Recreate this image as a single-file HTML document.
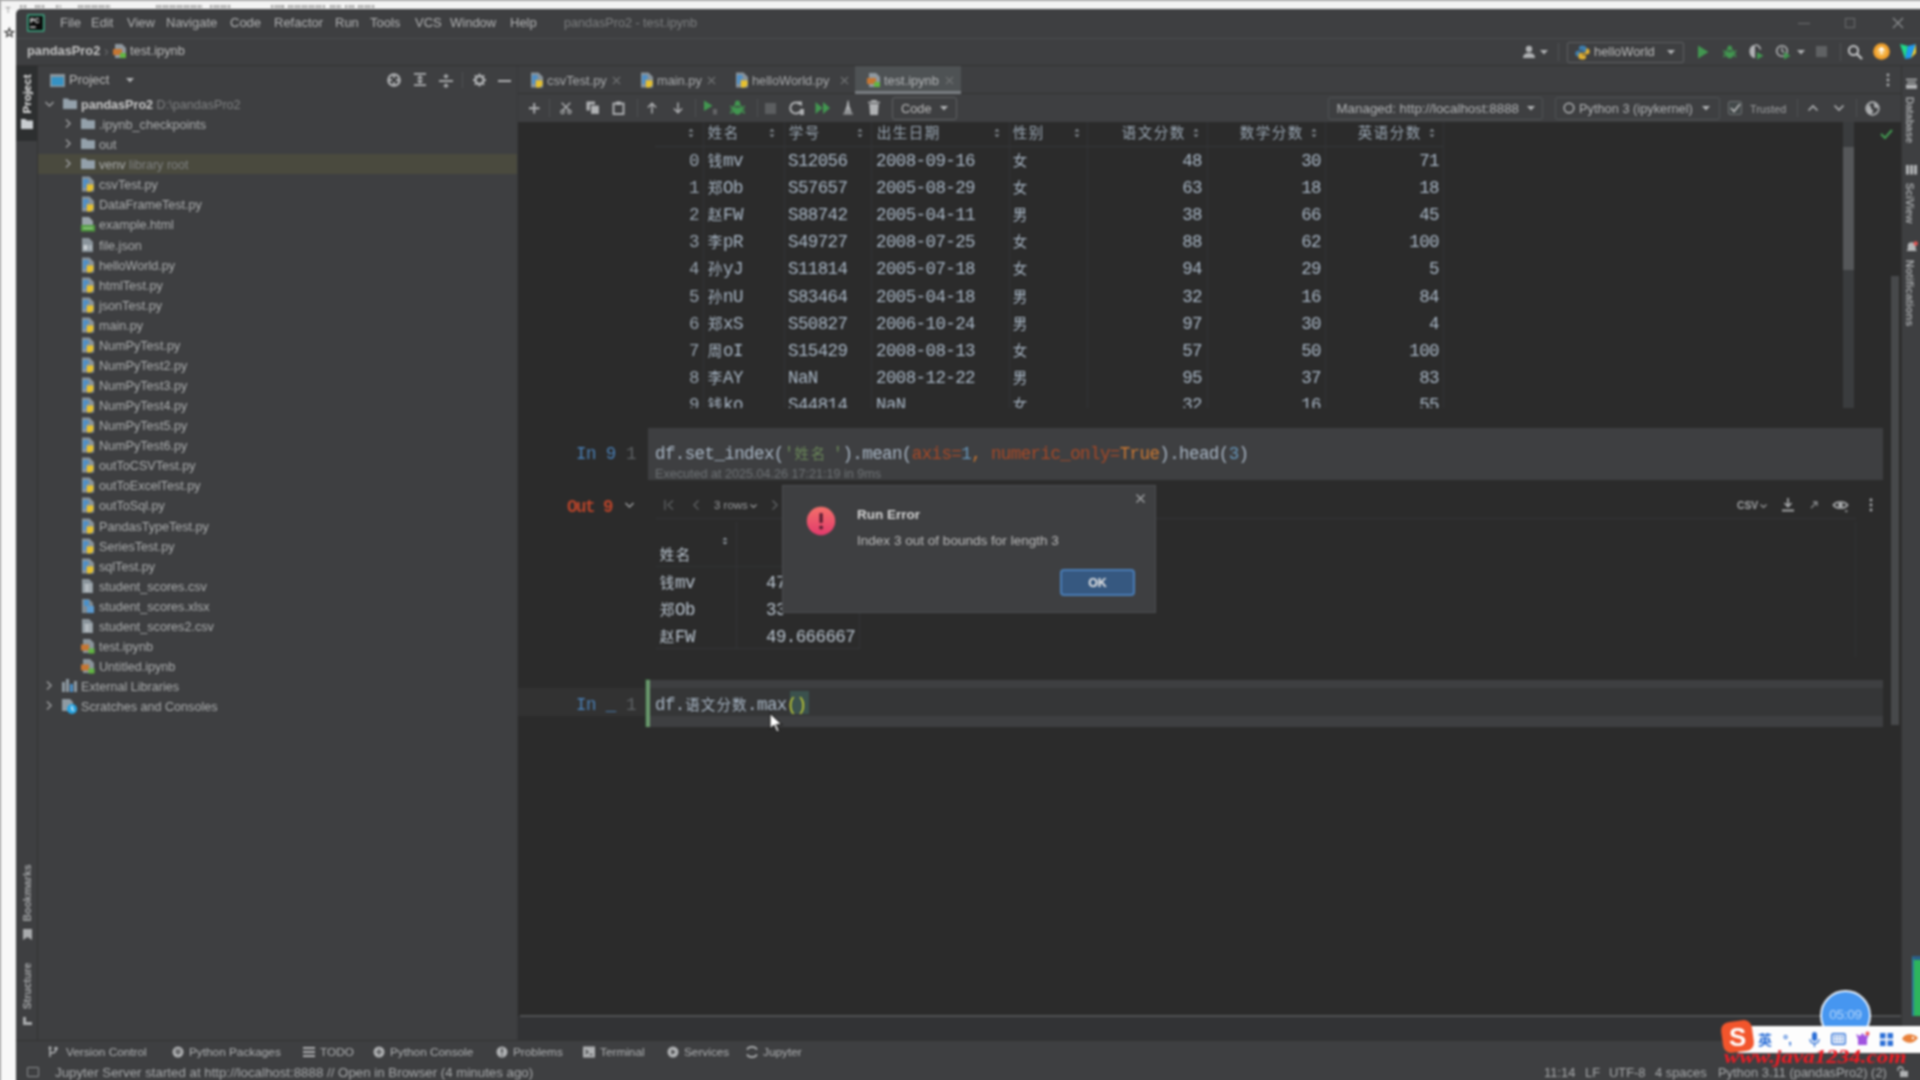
<!DOCTYPE html><html lang="zh"><head><meta charset="utf-8"><title>pandasPro2 - test.ipynb</title><style>
*{box-sizing:border-box;margin:0;padding:0}
html,body{width:1920px;height:1080px;overflow:hidden;background:#f8f8f8}
body{position:relative;font-family:"Liberation Sans","Noto Sans CJK SC",sans-serif;font-size:12.6px;color:#bbbbbb;line-height:1}
.a{position:absolute}
.t{position:absolute;white-space:nowrap;line-height:20px;height:20px}
.mono{font-family:"Liberation Mono","Noto Sans CJK SC",monospace;letter-spacing:-0.600px}
.cj{letter-spacing:0}
#win{left:16px;top:9px;width:1934px;height:1101px;background:#3e3f41;border-top-left-radius:5px;overflow:hidden}
#blurwrap{position:absolute;left:-30px;top:-30px;width:1980px;height:1140px;filter:blur(0.95px);background:#f8f8f8}
#inner{position:absolute;left:30px;top:30px;width:1920px;height:1080px}
.cj{display:inline-block;text-align:center;line-height:1;font-family:"Liberation Mono","Noto Sans CJK SC",monospace}
svg{position:absolute;overflow:visible}
</style></head><body><div id="blurwrap"><div id="inner">
<div class="a" style="left:-30px;top:-30px;width:1980px;height:31px;background:#a8a8a8"></div>
<div class="a" style="left:-30px;top:1px;width:1980px;height:8.500px;background:#f3f3f3"></div>
<div class="a" style="left:-30px;top:-30px;width:31.200px;height:1140px;background:#a8a8a8"></div>
<div class="a" style="left:20px;top:4.500px;width:7px;height:3px;background:repeating-linear-gradient(90deg,#a2a2a2 0 2px,#e2e2e2 2px 3.500px)"></div>
<div class="a" style="left:35px;top:4.500px;width:10px;height:3px;background:repeating-linear-gradient(90deg,#a2a2a2 0 2px,#e2e2e2 2px 3.500px)"></div>
<div class="a" style="left:56px;top:4.500px;width:5px;height:3px;background:repeating-linear-gradient(90deg,#a2a2a2 0 2px,#e2e2e2 2px 3.500px)"></div>
<div class="a" style="left:78px;top:4.500px;width:32px;height:3px;background:repeating-linear-gradient(90deg,#a2a2a2 0 2px,#e2e2e2 2px 3.500px)"></div>
<div class="a" style="left:156px;top:4.500px;width:46px;height:3px;background:repeating-linear-gradient(90deg,#a2a2a2 0 2px,#e2e2e2 2px 3.500px)"></div>
<div class="a" style="left:210px;top:4.500px;width:21px;height:3px;background:repeating-linear-gradient(90deg,#a2a2a2 0 2px,#e2e2e2 2px 3.500px)"></div>
<div class="a" style="left:271px;top:4.500px;width:14px;height:3px;background:repeating-linear-gradient(90deg,#a2a2a2 0 2px,#e2e2e2 2px 3.500px)"></div>
<div class="a" style="left:288px;top:4.500px;width:37px;height:3px;background:repeating-linear-gradient(90deg,#a2a2a2 0 2px,#e2e2e2 2px 3.500px)"></div>
<div class="a" style="left:330px;top:4.500px;width:11px;height:3px;background:repeating-linear-gradient(90deg,#a2a2a2 0 2px,#e2e2e2 2px 3.500px)"></div>
<div class="a" style="left:345px;top:4.500px;width:10px;height:3px;background:repeating-linear-gradient(90deg,#a2a2a2 0 2px,#e2e2e2 2px 3.500px)"></div>
<div class="a" style="left:358px;top:4.500px;width:17px;height:3px;background:repeating-linear-gradient(90deg,#a2a2a2 0 2px,#e2e2e2 2px 3.500px)"></div>
<div class="t" style="left:5.500px;top:0px;font-size:8.500px;color:#8a8a8a">T</div>
<div class="t" style="left:3.500px;top:23px;font-size:13px;color:#1d1d1d;font-weight:bold;-webkit-text-stroke:0.600px #1d1d1d;font-family:'Liberation Sans','DejaVu Sans',sans-serif">☆</div>
<div id="win" class="a"></div>
<div class="a" style="left:16px;top:38px;width:1934px;height:1px;background:#4a4d4f;"></div>
<div class="t" style="left:60px;top:13px;color:#b2b3b4;font-size:13px;">File</div>
<div class="t" style="left:91px;top:13px;color:#b2b3b4;font-size:13px;">Edit</div>
<div class="t" style="left:127px;top:13px;color:#b2b3b4;font-size:13px;">View</div>
<div class="t" style="left:166px;top:13px;color:#b2b3b4;font-size:13px;">Navigate</div>
<div class="t" style="left:230px;top:13px;color:#b2b3b4;font-size:13px;">Code</div>
<div class="t" style="left:274px;top:13px;color:#b2b3b4;font-size:13px;">Refactor</div>
<div class="t" style="left:335px;top:13px;color:#b2b3b4;font-size:13px;">Run</div>
<div class="t" style="left:370px;top:13px;color:#b2b3b4;font-size:13px;">Tools</div>
<div class="t" style="left:415px;top:13px;color:#b2b3b4;font-size:13px;">VCS</div>
<div class="t" style="left:450px;top:13px;color:#b2b3b4;font-size:13px;">Window</div>
<div class="t" style="left:510px;top:13px;color:#b2b3b4;font-size:13px;">Help</div>
<div class="t" style="left:564px;top:13px;color:#7d7f80;font-size:12.6px;">pandasPro2 - test.ipynb</div>
<div class="t" style="left:27px;top:41px;color:#c4c4c4;font-size:12.8px;font-weight:bold;">pandasPro2</div>
<div class="t" style="left:130px;top:41px;color:#bbbbbb;font-size:12.8px;">test.ipynb</div>
<div class="a" style="left:16px;top:65px;width:1934px;height:1px;background:#323232;"></div>
<div class="a" style="left:16px;top:66px;width:21px;height:974px;background:#3e3f41;"></div>
<div class="a" style="left:16px;top:66px;width:21px;height:75px;background:#2d2f30;"></div>
<div class="a" style="left:37px;top:66px;width:1px;height:974px;background:#323232;"></div>
<div class="t" style="left:69px;top:70px;color:#bbbbbb;font-size:13px;">Project</div>
<div class="a" style="left:38px;top:154px;width:480px;height:20px;background:#4a4a3e;"></div>
<div class="t" style="left:81px;top:95.0px;color:#abadae;font-size:12.6px;"><b style="color:#c8c8c8">pandasPro2</b> <span style="color:#7f8182">D:\pandasPro2</span></div>
<div class="t" style="left:99px;top:115.1px;color:#abadae;font-size:12.6px;">.ipynb_checkpoints</div>
<div class="t" style="left:99px;top:135.1px;color:#abadae;font-size:12.6px;">out</div>
<div class="t" style="left:99px;top:155.2px;color:#abadae;font-size:12.6px;">venv <span style="color:#7f8182">library root</span></div>
<div class="t" style="left:99px;top:175.3px;color:#abadae;font-size:12.6px;">csvTest.py</div>
<div class="t" style="left:99px;top:195.3px;color:#abadae;font-size:12.6px;">DataFrameTest.py</div>
<div class="t" style="left:99px;top:215.4px;color:#abadae;font-size:12.6px;">example.html</div>
<div class="t" style="left:99px;top:235.5px;color:#abadae;font-size:12.6px;">file.json</div>
<div class="t" style="left:99px;top:255.60000000000002px;color:#abadae;font-size:12.6px;">helloWorld.py</div>
<div class="t" style="left:99px;top:275.6px;color:#abadae;font-size:12.6px;">htmlTest.py</div>
<div class="t" style="left:99px;top:295.7px;color:#abadae;font-size:12.6px;">jsonTest.py</div>
<div class="t" style="left:99px;top:315.8px;color:#abadae;font-size:12.6px;">main.py</div>
<div class="t" style="left:99px;top:335.8px;color:#abadae;font-size:12.6px;">NumPyTest.py</div>
<div class="t" style="left:99px;top:355.9px;color:#abadae;font-size:12.6px;">NumPyTest2.py</div>
<div class="t" style="left:99px;top:376.0px;color:#abadae;font-size:12.6px;">NumPyTest3.py</div>
<div class="t" style="left:99px;top:396.1px;color:#abadae;font-size:12.6px;">NumPyTest4.py</div>
<div class="t" style="left:99px;top:416.1px;color:#abadae;font-size:12.6px;">NumPyTest5.py</div>
<div class="t" style="left:99px;top:436.2px;color:#abadae;font-size:12.6px;">NumPyTest6.py</div>
<div class="t" style="left:99px;top:456.3px;color:#abadae;font-size:12.6px;">outToCSVTest.py</div>
<div class="t" style="left:99px;top:476.3px;color:#abadae;font-size:12.6px;">outToExcelTest.py</div>
<div class="t" style="left:99px;top:496.4px;color:#abadae;font-size:12.6px;">outToSql.py</div>
<div class="t" style="left:99px;top:516.5px;color:#abadae;font-size:12.6px;">PandasTypeTest.py</div>
<div class="t" style="left:99px;top:536.5px;color:#abadae;font-size:12.6px;">SeriesTest.py</div>
<div class="t" style="left:99px;top:556.6px;color:#abadae;font-size:12.6px;">sqlTest.py</div>
<div class="t" style="left:99px;top:576.7px;color:#abadae;font-size:12.6px;">student_scores.csv</div>
<div class="t" style="left:99px;top:596.8px;color:#abadae;font-size:12.6px;">student_scores.xlsx</div>
<div class="t" style="left:99px;top:616.8px;color:#abadae;font-size:12.6px;">student_scores2.csv</div>
<div class="t" style="left:99px;top:636.9px;color:#abadae;font-size:12.6px;">test.ipynb</div>
<div class="t" style="left:99px;top:657.0px;color:#abadae;font-size:12.6px;">Untitled.ipynb</div>
<div class="t" style="left:81px;top:677.0px;color:#abadae;font-size:12.6px;">External Libraries</div>
<div class="t" style="left:81px;top:697.1px;color:#abadae;font-size:12.6px;">Scratches and Consoles</div>
<div class="a" style="left:518px;top:66px;width:1383px;height:28px;background:#3e3f41;"></div>
<div class="a" style="left:518px;top:93px;width:1383px;height:1px;background:#323232;"></div>
<div class="a" style="left:518px;top:94px;width:1383px;height:28px;background:#3e3f41;"></div>
<div class="a" style="left:518px;top:122px;width:1383px;height:918px;background:#2b2b2b;"></div>
<div class="a" style="left:517px;top:66px;width:1px;height:974px;background:#37383a;"></div>
<div class="a" style="left:1901px;top:66px;width:49px;height:974px;background:#3e3f41;"></div>
<div class="a" style="left:1901px;top:66px;width:1px;height:974px;background:#323232;"></div>
<div class="a" style="left:16px;top:1040px;width:1934px;height:1px;background:#323232;"></div>
<div class="a" style="left:16px;top:1041px;width:1934px;height:22px;background:#3e3f41;"></div>
<div class="a" style="left:16px;top:1063px;width:1934px;height:47px;background:#3e3f41;"></div>
<svg style="left:27px;top:13.5px" width="17.5" height="18" viewBox="0 0 18 18"><rect x="0" y="0" width="18" height="18" rx="1" fill="#3fa884"/><rect x="1.6" y="1.6" width="14.8" height="14.8" fill="#0b0b0b"/><text x="3" y="9" font-family="Liberation Sans,sans-serif" font-size="7" font-weight="bold" fill="#fff">PC</text><rect x="3" y="12.6" width="6" height="1.3" fill="#fff"/></svg>
<div class="a" style="left:1798px;top:23px;width:12px;height:1px;background:#6e7072;"></div>
<svg style="left:1845px;top:18px" width="10" height="10" viewBox="0 0 10 10"><rect x="0.5" y="0.5" width="9" height="9" fill="none" stroke="#6a6c6e" stroke-width="1"/></svg>
<svg style="left:1893px;top:18px" width="10" height="10" viewBox="0 0 10 10"><path d="M0 0L10 10M10 0L0 10" stroke="#8a8c8e" stroke-width="1.3"/></svg>
<div class="t" style="left:104px;top:41px;color:#6d6f70;font-size:14px;">›</div>
<svg style="left:113px;top:43px" width="14" height="16" viewBox="0 0 14 16"><path d="M2 1h7l4 4v10H2z" fill="#8f989f"/><rect x="0" y="6" width="9" height="6" fill="#c57633"/><rect x="7" y="10" width="6" height="5" fill="#62b543"/></svg>
<svg style="left:1522px;top:45px" width="16" height="14" viewBox="0 0 16 14"><circle cx="7" cy="4" r="3.2" fill="#afb1b3"/><path d="M1 13c0-4 3-5 6-5s6 1 6 5z" fill="#afb1b3"/></svg>
<svg style="left:1540px;top:50px" width="8" height="5" viewBox="0 0 8 5"><path d="M0 0h8L4 4.5z" fill="#afb1b3"/></svg>
<div class="a" style="left:1558px;top:43px;width:1px;height:18px;background:#515355;"></div>
<div class="a" style="left:1567px;top:42px;width:117px;height:21px;border:1px solid #5e6163;border-radius:2px"></div>
<svg style="left:1575px;top:45px" width="15" height="15" viewBox="0 0 14 14"><path d="M7 0.5c-3 0-3.2 1.2-3.2 2.3V4.5H7.2v.8H2.2C1 5.3.3 6.4.3 8s.8 2.7 2 2.7h1.3V8.8c0-1.2 1-2.2 2.2-2.2h3.2c1 0 1.8-.8 1.8-1.8V2.8C10.800 1.500 9.700.5 7 .5z" fill="#3d7dae"/><path d="M7 13.500c3 0 3.200-1.200 3.200-2.300V9.500H6.800v-.8h5c1.200 0 1.900-1.100 1.900-2.700s-.8-2.700-2-2.700h-1.300v1.900c0 1.200-1 2.200-2.200 2.200H5c-1 0-1.800.8-1.800 1.800v2c0 1.300 1.100 2.300 3.800 2.300z" fill="#e0b032"/></svg>
<div class="t" style="left:1594px;top:42px;color:#bbbbbb;font-size:12.9px;">helloWorld</div>
<svg style="left:1667px;top:50px" width="8" height="5" viewBox="0 0 8 5"><path d="M0 0h8L4 4.5z" fill="#afb1b3"/></svg>
<svg style="left:1697px;top:45px" width="12" height="14" viewBox="0 0 12 14"><path d="M1 0.500L11.500 7 1 13.500z" fill="#429650"/></svg>
<svg style="left:1723px;top:45px" width="13.5" height="14.5" viewBox="0 0 15 16"><ellipse cx="7.500" cy="9" rx="4.800" ry="5.800" fill="#429650"/><circle cx="7.500" cy="3.200" r="2.600" fill="#429650"/><path d="M0 6l3 2M15 6l-3 2M0 13l3-1.500M15 13l-3-1.500M0.500 9.500h14" stroke="#429650" stroke-width="1.400"/><rect x="4.500" y="6" width="6" height="1.400" fill="#3e3f41"/></svg>
<svg style="left:1748px;top:44px" width="16" height="16" viewBox="0 0 16 16"><path d="M7 1C3.500 1 1.500 3.500 1.500 7.500S4 14 7 14V1z" fill="#afb1b3"/><path d="M7 1c3 0 5 2 5.500 4.500" stroke="#afb1b3" stroke-width="1.600" fill="none"/><path d="M9 8l6.500 3.700L9 15.500z" fill="#429650"/></svg>
<svg style="left:1775px;top:44px" width="16" height="16" viewBox="0 0 16 16"><circle cx="7" cy="7" r="5.300" fill="none" stroke="#afb1b3" stroke-width="1.600"/><path d="M7 3.500V7l2.200 1.300" stroke="#afb1b3" stroke-width="1.400" fill="none"/><path d="M9 8l6.500 3.700L9 15.500z" fill="#429650"/></svg>
<svg style="left:1797px;top:50px" width="8" height="5" viewBox="0 0 8 5"><path d="M0 0h8L4 4.500z" fill="#afb1b3"/></svg>
<div class="a" style="left:1816px;top:46px;width:11px;height:11px;background:#5f6163;"></div>
<div class="a" style="left:1840px;top:43px;width:1px;height:18px;background:#515355;"></div>
<svg style="left:1847px;top:44px" width="16" height="16" viewBox="0 0 16 16"><circle cx="6.500" cy="6.500" r="4.600" fill="none" stroke="#c0c2c4" stroke-width="2"/><path d="M10 10l5 5" stroke="#c0c2c4" stroke-width="2.400"/></svg>
<svg style="left:1873px;top:43px" width="17" height="17" viewBox="0 0 17 17"><circle cx="8.500" cy="8.500" r="8.300" fill="#f0a02c"/><circle cx="8.500" cy="8.500" r="5" fill="#f6bb55"/><path d="M8.500 5v6M6 7.500l2.500-2.500 2.500 2.500" stroke="#fff" stroke-width="1.600" fill="none"/></svg>
<svg style="left:1899px;top:43px" width="18" height="17" viewBox="0 0 18 17"><path d="M1 1l8 2-3 13z" fill="#21d789"/><path d="M9 3l8-2-5 14-6 1z" fill="#1e9af0"/><path d="M12 15l5-14v9z" fill="#f3d232"/></svg>
<div class="t" style="left:17px;top:84px;width:20px;transform:rotate(-90deg);transform-origin:10px 10px;font-size:11.500px;font-weight:bold;color:#e8e8e8;text-align:center;overflow:visible"><span style="position:absolute;left:-13px;top:0;width:46px;text-align:center">Project</span></div>
<svg style="left:21px;top:118px" width="12" height="11" viewBox="0 0 12 11"><path d="M0 1h4.500l1.200 1.600H12V11H0z" fill="#c9cdd0"/></svg>
<div class="t" style="left:17px;top:883px;width:20px;transform:rotate(-90deg);transform-origin:10px 10px;font-size:10.500px;font-weight:bold;color:#a3a5a7"><span style="position:absolute;left:-22px;top:0;width:64px;text-align:center">Bookmarks</span></div>
<svg style="left:23px;top:929px" width="9" height="11" viewBox="0 0 9 11"><path d="M0 0h9v11L4.500 8 0 11z" fill="#a9abad"/></svg>
<div class="t" style="left:17px;top:976px;width:20px;transform:rotate(-90deg);transform-origin:10px 10px;font-size:10.500px;font-weight:bold;color:#a3a5a7"><span style="position:absolute;left:-20px;top:0;width:60px;text-align:center">Structure</span></div>
<svg style="left:23px;top:1017px" width="9" height="8" viewBox="0 0 9 8"><path d="M0 0h3v8H0zM3 5h6v3H3z" fill="#a9abad"/></svg>
<svg style="left:50px;top:74px" width="15" height="13" viewBox="0 0 15 13"><rect x="0" y="0" width="15" height="13" fill="#8b959c"/><rect x="1.500" y="3" width="12" height="8.500" fill="#3592c4"/></svg>
<svg style="left:126px;top:78px" width="8" height="5" viewBox="0 0 8 5"><path d="M0 0h8L4 4.500z" fill="#afb1b3"/></svg>
<svg style="left:386.5px;top:73px" width="14" height="14" viewBox="0 0 14 14"><circle cx="7" cy="7" r="5.700" fill="none" stroke="#afb1b3" stroke-width="2.200"/><path d="M7 1v4M7 9v4M1 7h4M9 7h4" stroke="#afb1b3" stroke-width="1.800"/></svg>
<svg style="left:413.5px;top:73px" width="12" height="13" viewBox="0 0 12 13"><path d="M0 0.900h12M0 12.100h12" stroke="#afb1b3" stroke-width="1.800"/><path d="M6 3.500v6M3.500 5.500L6 3.200 8.500 5.500M3.500 7.500L6 9.800 8.500 7.500" stroke="#afb1b3" stroke-width="1.400" fill="none"/></svg>
<svg style="left:438.5px;top:73.5px" width="14" height="14" viewBox="0 0 14 14"><path d="M0 7h14" stroke="#afb1b3" stroke-width="1.800"/><path d="M4.800 1.500L7 3.800l2.200-2.300M7 0v3.500M4.800 12.500L7 10.200l2.200 2.300M7 14v-3.500" stroke="#afb1b3" stroke-width="1.400" fill="none"/></svg>
<div class="a" style="left:462px;top:72px;width:1px;height:16px;background:#4d5052;"></div>
<svg style="left:472.5px;top:73px" width="13" height="14" viewBox="0 0 14 14"><circle cx="7" cy="7" r="4.300" fill="none" stroke="#afb1b3" stroke-width="2.600"/><path d="M7 0v14M0 7h14M2 2l10 10M12 2L2 12" stroke="#afb1b3" stroke-width="2" stroke-dasharray="2.200 9.800"/><circle cx="7" cy="7" r="1.800" fill="#3e3f41"/></svg>
<div class="a" style="left:497.5px;top:79.5px;width:13.5px;height:2px;background:#afb1b3;"></div>
<svg style="left:45px;top:101.0px" width="9" height="6" viewBox="0 0 9 6"><path d="M0.500 1l4 4 4-4" stroke="#9a9c9e" stroke-width="1.500" fill="none"/></svg>
<svg style="left:63px;top:98.0px" width="14" height="11" viewBox="0 0 14 11"><path d="M0 0.500h5l1.400 1.700H14V11H0z" fill="#93a0aa"/></svg>
<svg style="left:65px;top:119.1px" width="6" height="9" viewBox="0 0 6 9"><path d="M1 0.500l4 4-4 4" stroke="#9a9c9e" stroke-width="1.500" fill="none"/></svg>
<svg style="left:81px;top:118.1px" width="14" height="11" viewBox="0 0 14 11"><path d="M0 0.500h5l1.400 1.700H14V11H0z" fill="#93a0aa"/></svg>
<svg style="left:65px;top:139.1px" width="6" height="9" viewBox="0 0 6 9"><path d="M1 0.500l4 4-4 4" stroke="#9a9c9e" stroke-width="1.500" fill="none"/></svg>
<svg style="left:81px;top:138.1px" width="14" height="11" viewBox="0 0 14 11"><path d="M0 0.500h5l1.400 1.700H14V11H0z" fill="#93a0aa"/></svg>
<svg style="left:65px;top:159.2px" width="6" height="9" viewBox="0 0 6 9"><path d="M1 0.500l4 4-4 4" stroke="#9a9c9e" stroke-width="1.500" fill="none"/></svg>
<svg style="left:81px;top:158.2px" width="14" height="11" viewBox="0 0 14 11"><path d="M0 0.500h5l1.400 1.700H14V11H0z" fill="#93a0aa"/></svg>
<svg style="left:81px;top:176.3px" width="14" height="16" viewBox="0 0 14 16"><path d="M1 0.500h7.500L13 5v10.500H1z" fill="#88939b"/><path d="M2 3h5.500v4.500H5V12H2z" fill="#4f8fc6"/><path d="M6 8.500h6.500V13L10 15.500H6z" fill="#e6c12e"/></svg>
<svg style="left:81px;top:196.3px" width="14" height="16" viewBox="0 0 14 16"><path d="M1 0.500h7.500L13 5v10.500H1z" fill="#88939b"/><path d="M2 3h5.500v4.500H5V12H2z" fill="#4f8fc6"/><path d="M6 8.500h6.500V13L10 15.500H6z" fill="#e6c12e"/></svg>
<svg style="left:81px;top:216.4px" width="14" height="16" viewBox="0 0 14 16"><path d="M1 1h7l4 4v5H1z" fill="#99a3aa"/><rect x="0" y="9" width="14" height="6.500" fill="#4f9a3f"/><rect x="2" y="11.500" width="10" height="1.500" fill="#9fd08f"/></svg>
<svg style="left:81px;top:236.5px" width="14" height="16" viewBox="0 0 14 16"><path d="M1 1h7l4 4v10H1z" fill="#8a949b"/><rect x="2.500" y="8" width="4" height="5" fill="#c9cfd3"/><rect x="8" y="8" width="3" height="5" fill="#aab3b9"/></svg>
<svg style="left:81px;top:256.6px" width="14" height="16" viewBox="0 0 14 16"><path d="M1 0.500h7.500L13 5v10.500H1z" fill="#88939b"/><path d="M2 3h5.500v4.500H5V12H2z" fill="#4f8fc6"/><path d="M6 8.500h6.500V13L10 15.500H6z" fill="#e6c12e"/></svg>
<svg style="left:81px;top:276.6px" width="14" height="16" viewBox="0 0 14 16"><path d="M1 0.500h7.500L13 5v10.500H1z" fill="#88939b"/><path d="M2 3h5.500v4.500H5V12H2z" fill="#4f8fc6"/><path d="M6 8.500h6.500V13L10 15.500H6z" fill="#e6c12e"/></svg>
<svg style="left:81px;top:296.7px" width="14" height="16" viewBox="0 0 14 16"><path d="M1 0.500h7.500L13 5v10.500H1z" fill="#88939b"/><path d="M2 3h5.500v4.500H5V12H2z" fill="#4f8fc6"/><path d="M6 8.500h6.500V13L10 15.500H6z" fill="#e6c12e"/></svg>
<svg style="left:81px;top:316.8px" width="14" height="16" viewBox="0 0 14 16"><path d="M1 0.500h7.500L13 5v10.500H1z" fill="#88939b"/><path d="M2 3h5.500v4.500H5V12H2z" fill="#4f8fc6"/><path d="M6 8.500h6.500V13L10 15.500H6z" fill="#e6c12e"/></svg>
<svg style="left:81px;top:336.8px" width="14" height="16" viewBox="0 0 14 16"><path d="M1 0.500h7.500L13 5v10.500H1z" fill="#88939b"/><path d="M2 3h5.500v4.500H5V12H2z" fill="#4f8fc6"/><path d="M6 8.500h6.500V13L10 15.500H6z" fill="#e6c12e"/></svg>
<svg style="left:81px;top:356.9px" width="14" height="16" viewBox="0 0 14 16"><path d="M1 0.500h7.500L13 5v10.500H1z" fill="#88939b"/><path d="M2 3h5.500v4.500H5V12H2z" fill="#4f8fc6"/><path d="M6 8.500h6.500V13L10 15.500H6z" fill="#e6c12e"/></svg>
<svg style="left:81px;top:377.0px" width="14" height="16" viewBox="0 0 14 16"><path d="M1 0.500h7.500L13 5v10.500H1z" fill="#88939b"/><path d="M2 3h5.500v4.500H5V12H2z" fill="#4f8fc6"/><path d="M6 8.500h6.500V13L10 15.500H6z" fill="#e6c12e"/></svg>
<svg style="left:81px;top:397.1px" width="14" height="16" viewBox="0 0 14 16"><path d="M1 0.500h7.500L13 5v10.500H1z" fill="#88939b"/><path d="M2 3h5.500v4.500H5V12H2z" fill="#4f8fc6"/><path d="M6 8.500h6.500V13L10 15.500H6z" fill="#e6c12e"/></svg>
<svg style="left:81px;top:417.1px" width="14" height="16" viewBox="0 0 14 16"><path d="M1 0.500h7.500L13 5v10.500H1z" fill="#88939b"/><path d="M2 3h5.500v4.500H5V12H2z" fill="#4f8fc6"/><path d="M6 8.500h6.500V13L10 15.500H6z" fill="#e6c12e"/></svg>
<svg style="left:81px;top:437.2px" width="14" height="16" viewBox="0 0 14 16"><path d="M1 0.500h7.500L13 5v10.500H1z" fill="#88939b"/><path d="M2 3h5.500v4.500H5V12H2z" fill="#4f8fc6"/><path d="M6 8.500h6.500V13L10 15.500H6z" fill="#e6c12e"/></svg>
<svg style="left:81px;top:457.3px" width="14" height="16" viewBox="0 0 14 16"><path d="M1 0.500h7.500L13 5v10.500H1z" fill="#88939b"/><path d="M2 3h5.500v4.500H5V12H2z" fill="#4f8fc6"/><path d="M6 8.500h6.500V13L10 15.500H6z" fill="#e6c12e"/></svg>
<svg style="left:81px;top:477.3px" width="14" height="16" viewBox="0 0 14 16"><path d="M1 0.500h7.500L13 5v10.500H1z" fill="#88939b"/><path d="M2 3h5.500v4.500H5V12H2z" fill="#4f8fc6"/><path d="M6 8.500h6.500V13L10 15.500H6z" fill="#e6c12e"/></svg>
<svg style="left:81px;top:497.4px" width="14" height="16" viewBox="0 0 14 16"><path d="M1 0.500h7.500L13 5v10.500H1z" fill="#88939b"/><path d="M2 3h5.500v4.500H5V12H2z" fill="#4f8fc6"/><path d="M6 8.500h6.500V13L10 15.500H6z" fill="#e6c12e"/></svg>
<svg style="left:81px;top:517.5px" width="14" height="16" viewBox="0 0 14 16"><path d="M1 0.500h7.500L13 5v10.500H1z" fill="#88939b"/><path d="M2 3h5.500v4.500H5V12H2z" fill="#4f8fc6"/><path d="M6 8.500h6.500V13L10 15.500H6z" fill="#e6c12e"/></svg>
<svg style="left:81px;top:537.5px" width="14" height="16" viewBox="0 0 14 16"><path d="M1 0.500h7.500L13 5v10.500H1z" fill="#88939b"/><path d="M2 3h5.500v4.500H5V12H2z" fill="#4f8fc6"/><path d="M6 8.500h6.500V13L10 15.500H6z" fill="#e6c12e"/></svg>
<svg style="left:81px;top:557.6px" width="14" height="16" viewBox="0 0 14 16"><path d="M1 0.500h7.500L13 5v10.500H1z" fill="#88939b"/><path d="M2 3h5.500v4.500H5V12H2z" fill="#4f8fc6"/><path d="M6 8.500h6.500V13L10 15.500H6z" fill="#e6c12e"/></svg>
<svg style="left:81px;top:577.7px" width="14" height="16" viewBox="0 0 14 16"><path d="M1 1h7l4 4v10H1z" fill="#8a949b"/><path d="M3 7h8M3 10h8M3 13h8M6 6v8" stroke="#cdd3d6" stroke-width="1.200"/></svg>
<svg style="left:81px;top:597.8px" width="14" height="16" viewBox="0 0 14 16"><path d="M1 1h7l4 4v10H1z" fill="#7f8b94"/><rect x="3" y="2" width="5" height="6" fill="#4a90c9"/><rect x="6" y="8" width="7" height="7" fill="#5b9bd1"/></svg>
<svg style="left:81px;top:617.8px" width="14" height="16" viewBox="0 0 14 16"><path d="M1 1h7l4 4v10H1z" fill="#8a949b"/><path d="M3 7h8M3 10h8M3 13h8M6 6v8" stroke="#cdd3d6" stroke-width="1.200"/></svg>
<svg style="left:81px;top:637.9px" width="14" height="16" viewBox="0 0 14 16"><path d="M2 1h7l4 4v10H2z" fill="#8a949b"/><rect x="0" y="6.500" width="8" height="6" fill="#c57633"/><rect x="7.500" y="10.500" width="6" height="5" fill="#62b543"/></svg>
<svg style="left:81px;top:658.0px" width="14" height="16" viewBox="0 0 14 16"><path d="M2 1h7l4 4v10H2z" fill="#8a949b"/><rect x="0" y="6.500" width="8" height="6" fill="#c57633"/><rect x="7.500" y="10.500" width="6" height="5" fill="#62b543"/></svg>
<svg style="left:46px;top:681.0px" width="6" height="9" viewBox="0 0 6 9"><path d="M1 0.500l4 4-4 4" stroke="#9a9c9e" stroke-width="1.500" fill="none"/></svg>
<svg style="left:62px;top:679.0px" width="15" height="13" viewBox="0 0 15 13"><rect x="0" y="3" width="3" height="10" fill="#8f9aa2"/><rect x="4" y="0" width="3" height="13" fill="#8f9aa2"/><rect x="8" y="5" width="3" height="8" fill="#4a90c9"/><rect x="12" y="2" width="3" height="11" fill="#8f9aa2"/></svg>
<svg style="left:46px;top:701.1px" width="6" height="9" viewBox="0 0 6 9"><path d="M1 0.500l4 4-4 4" stroke="#9a9c9e" stroke-width="1.500" fill="none"/></svg>
<svg style="left:62px;top:699.1px" width="15" height="15" viewBox="0 0 15 15"><path d="M0 0h8l3 3v9H0z" fill="#8f9aa2"/><circle cx="10" cy="10" r="5" fill="#28a4e2"/><path d="M10 7v3.500l2 1" stroke="#fff" stroke-width="1.200" fill="none"/></svg>
<div class="a" style="left:855px;top:66px;width:106px;height:27px;background:#4e5254;"></div>
<div class="a" style="left:855px;top:91px;width:106px;height:3px;background:#7a7e82;"></div>
<svg style="left:530px;top:72px" width="14" height="16" viewBox="0 0 14 16"><path d="M1 0.500h7.500L13 5v10.500H1z" fill="#88939b"/><path d="M2 3h5.500v4.500H5V12H2z" fill="#4f8fc6"/><path d="M6 8.500h6.500V13L10 15.500H6z" fill="#e6c12e"/></svg>
<div class="t" style="left:547px;top:70.8px;color:#a9abad;font-size:12.8px;">csvTest.py</div>
<svg style="left:613px;top:77px" width="7" height="7" viewBox="0 0 7 7"><path d="M0 0l7 7M7 0L0 7" stroke="#6f7173" stroke-width="1.200"/></svg>
<svg style="left:640px;top:72px" width="14" height="16" viewBox="0 0 14 16"><path d="M1 0.500h7.500L13 5v10.500H1z" fill="#88939b"/><path d="M2 3h5.500v4.500H5V12H2z" fill="#4f8fc6"/><path d="M6 8.500h6.500V13L10 15.500H6z" fill="#e6c12e"/></svg>
<div class="t" style="left:657px;top:70.8px;color:#a9abad;font-size:12.8px;">main.py</div>
<svg style="left:708px;top:77px" width="7" height="7" viewBox="0 0 7 7"><path d="M0 0l7 7M7 0L0 7" stroke="#6f7173" stroke-width="1.200"/></svg>
<svg style="left:735px;top:72px" width="14" height="16" viewBox="0 0 14 16"><path d="M1 0.500h7.500L13 5v10.500H1z" fill="#88939b"/><path d="M2 3h5.500v4.500H5V12H2z" fill="#4f8fc6"/><path d="M6 8.500h6.500V13L10 15.500H6z" fill="#e6c12e"/></svg>
<div class="t" style="left:752px;top:70.8px;color:#a9abad;font-size:12.8px;">helloWorld.py</div>
<svg style="left:841px;top:77px" width="7" height="7" viewBox="0 0 7 7"><path d="M0 0l7 7M7 0L0 7" stroke="#6f7173" stroke-width="1.200"/></svg>
<svg style="left:867px;top:72px" width="14" height="16" viewBox="0 0 14 16"><path d="M2 1h7l4 4v10H2z" fill="#8f989f"/><rect x="0" y="6" width="9" height="6" fill="#c57633"/><rect x="7" y="10" width="6" height="5" fill="#62b543"/></svg>
<div class="t" style="left:884px;top:70.8px;color:#b4b6b8;font-size:12.8px;">test.ipynb</div>
<svg style="left:946px;top:77px" width="7" height="7" viewBox="0 0 7 7"><path d="M0 0l7 7M7 0L0 7" stroke="#6f7173" stroke-width="1.200"/></svg>
<svg style="left:1886px;top:73px" width="4" height="14" viewBox="0 0 4 14"><circle cx="2" cy="2" r="1.400" fill="#afb1b3"/><circle cx="2" cy="7" r="1.400" fill="#afb1b3"/><circle cx="2" cy="12" r="1.400" fill="#afb1b3"/></svg>
<svg style="left:529px;top:103px" width="10.5" height="10.5" viewBox="0 0 10.5 10.5"><path d="M5.250 0v10.500M0 5.250h10.500" stroke="#afb1b3" stroke-width="1.900"/></svg>
<div class="a" style="left:549px;top:99px;width:1px;height:18px;background:#4d5052;"></div>
<svg style="left:560px;top:102px" width="12" height="12" viewBox="0 0 14 14"><path d="M2 1l9 9M12 1L3 10" stroke="#afb1b3" stroke-width="1.600"/><circle cx="3" cy="11.500" r="2" fill="none" stroke="#afb1b3" stroke-width="1.400"/><circle cx="11" cy="11.500" r="2" fill="none" stroke="#afb1b3" stroke-width="1.400"/></svg>
<svg style="left:586px;top:101px" width="14" height="14" viewBox="0 0 14 14"><rect x="0.500" y="0.500" width="8.500" height="9" fill="#afb1b3"/><rect x="4.500" y="4" width="9" height="9.500" fill="#afb1b3" stroke="#3e3f41" stroke-width="1.200"/></svg>
<svg style="left:612px;top:101px" width="13" height="14" viewBox="0 0 13 14"><rect x="1.500" y="2.500" width="10" height="10.500" fill="none" stroke="#afb1b3" stroke-width="1.900"/><rect x="4" y="0.500" width="5" height="3.500" fill="#afb1b3"/></svg>
<div class="a" style="left:637px;top:99px;width:1px;height:18px;background:#4d5052;"></div>
<svg style="left:647px;top:102px" width="10" height="12" viewBox="0 0 12 14"><path d="M6 13.500V2M1 6.500l5-5 5 5" stroke="#afb1b3" stroke-width="1.800" fill="none"/></svg>
<svg style="left:673px;top:102px" width="10" height="12" viewBox="0 0 12 14"><path d="M6 0.500V12M1 7.500l5 5 5-5" stroke="#afb1b3" stroke-width="1.800" fill="none"/></svg>
<div class="a" style="left:695px;top:99px;width:1px;height:18px;background:#4d5052;"></div>
<svg style="left:703px;top:100px" width="14" height="15" viewBox="0 0 14 15"><path d="M1 0.500l8.500 5.300-8.500 5.300z" fill="#429650"/><path d="M11 9v5.500M13 9v5.500" stroke="#8a8c8e" stroke-width="1"/></svg>
<svg style="left:730px;top:100px" width="15" height="16" viewBox="0 0 15 16"><ellipse cx="7.500" cy="9" rx="4.800" ry="5.800" fill="#429650"/><circle cx="7.500" cy="3.200" r="2.600" fill="#429650"/><path d="M0 6l3 2M15 6l-3 2M0 13l3-1.500M15 13l-3-1.500M0.500 9.500h14" stroke="#429650" stroke-width="1.400"/><rect x="4.500" y="6" width="6" height="1.400" fill="#3e3f41"/></svg>
<div class="a" style="left:757px;top:99px;width:1px;height:18px;background:#4d5052;"></div>
<div class="a" style="left:765px;top:103px;width:11px;height:11px;background:#5c5e60;"></div>
<svg style="left:789px;top:101px" width="15" height="14" viewBox="0 0 15 14"><path d="M11 3.500A5.500 5.500 0 1 0 11 10.500" stroke="#afb1b3" stroke-width="2" fill="none"/><path d="M8 0.500h5v5z" fill="#afb1b3"/><rect x="11" y="8" width="4" height="6" fill="#afb1b3"/></svg>
<svg style="left:815px;top:101px" width="16" height="14" viewBox="0 0 16 14"><path d="M0.500 1l7 6-7 6z" fill="#429650"/><path d="M8 1l7 6-7 6z" fill="#429650"/></svg>
<svg style="left:842px;top:100px" width="12" height="15" viewBox="0 0 12 15"><path d="M5.600 0.500h1l.9 6 3.500 8H1l3.500-8z" fill="#afb1b3"/><path d="M3 9.500v5M6 9.500v5M9 10v4.500" stroke="#3e3f41" stroke-width="0.800"/></svg>
<svg style="left:868px;top:100px" width="12" height="15" viewBox="0 0 12 15"><path d="M0 2.500h12M4 2.500V0.700h4v1.800" stroke="#afb1b3" stroke-width="1.500" fill="none"/><path d="M1.300 4h9.400l-.8 11H2.100z" fill="#afb1b3"/></svg>
<div class="a" style="left:892px;top:97px;width:65px;height:23px;border:1px solid #5e6163;border-radius:3px"></div>
<div class="t" style="left:901px;top:98.7px;color:#bbbbbb;font-size:12.8px;">Code</div>
<svg style="left:940px;top:106px" width="8" height="5" viewBox="0 0 8 5"><path d="M0 0h8L4 4.500z" fill="#afb1b3"/></svg>
<div class="a" style="left:1328px;top:97px;width:215px;height:23px;border:1px solid #4f5254;border-radius:3px"></div>
<div class="t" style="left:1336.5px;top:98.7px;color:#b0b2b4;font-size:13.35px;">Managed: http://localhost:8888</div>
<svg style="left:1527px;top:106px" width="8" height="5" viewBox="0 0 8 5"><path d="M0 0h8L4 4.500z" fill="#afb1b3"/></svg>
<div class="a" style="left:1555px;top:97px;width:165px;height:23px;border:1px solid #4f5254;border-radius:3px"></div>
<svg style="left:1563px;top:102px" width="12" height="12" viewBox="0 0 12 12"><circle cx="6" cy="6" r="4.800" fill="none" stroke="#afb1b3" stroke-width="1.500"/></svg>
<div class="t" style="left:1579px;top:98.7px;color:#b0b2b4;font-size:12.8px;">Python 3 (ipykernel)</div>
<svg style="left:1702px;top:106px" width="8" height="5" viewBox="0 0 8 5"><path d="M0 0h8L4 4.500z" fill="#afb1b3"/></svg>
<div class="a" style="left:1728px;top:101px;width:14px;height:14px;border:1px solid #6b6e70;background:#43494a;border-radius:2px"></div>
<svg style="left:1730px;top:103px" width="11" height="10" viewBox="0 0 11 10"><path d="M1 5l3 3.500L10 1" stroke="#bbbbbb" stroke-width="1.700" fill="none"/></svg>
<div class="t" style="left:1750px;top:98.5px;color:#a0a2a4;font-size:10.8px;">Trusted</div>
<div class="a" style="left:1797px;top:99px;width:1px;height:18px;background:#4d5052;"></div>
<svg style="left:1808px;top:105px" width="10" height="6" viewBox="0 0 10 6"><path d="M0.500 5.500l4.500-4.500 4.500 4.500" stroke="#afb1b3" stroke-width="1.600" fill="none"/></svg>
<svg style="left:1834px;top:105px" width="10" height="6" viewBox="0 0 10 6"><path d="M0.500 0.500l4.500 4.500 4.500-4.500" stroke="#afb1b3" stroke-width="1.600" fill="none"/></svg>
<div class="a" style="left:1856px;top:99px;width:1px;height:18px;background:#4d5052;"></div>
<svg style="left:1865px;top:101px" width="15" height="15" viewBox="0 0 15 15"><circle cx="7.500" cy="7.500" r="6.300" fill="none" stroke="#afb1b3" stroke-width="1.700"/><path d="M3 4c2 0 3 1 3 3s2 1 2 3-2 3-3 3-3-3-3-5z" fill="#afb1b3"/><path d="M9 2c2 1 4 3 4 5h-2c-1 0-2-1-2-2z" fill="#afb1b3"/></svg>
<div class="a" style="left:518px;top:122px;width:1326px;height:286px;overflow:hidden">
<div class="t mono" style="top:0.30000000000001137px;line-height:22px;height:22px;left:189px;color:#9aa7b4;font-size:17.5px"><span class="cj" style="width:16px;font-size:14.5px">姓</span><span class="cj" style="width:16px;font-size:14.5px">名</span></div>
<div class="t mono" style="top:0.30000000000001137px;line-height:22px;height:22px;left:270px;color:#9aa7b4;font-size:17.5px"><span class="cj" style="width:16px;font-size:14.5px">学</span><span class="cj" style="width:16px;font-size:14.5px">号</span></div>
<div class="t mono" style="top:0.30000000000001137px;line-height:22px;height:22px;left:358px;color:#9aa7b4;font-size:17.5px"><span class="cj" style="width:16px;font-size:14.5px">出</span><span class="cj" style="width:16px;font-size:14.5px">生</span><span class="cj" style="width:16px;font-size:14.5px">日</span><span class="cj" style="width:16px;font-size:14.5px">期</span></div>
<div class="t mono" style="top:0.30000000000001137px;line-height:22px;height:22px;left:494px;color:#9aa7b4;font-size:17.5px"><span class="cj" style="width:16px;font-size:14.5px">性</span><span class="cj" style="width:16px;font-size:14.5px">别</span></div>
<div class="t mono" style="top:0.30000000000001137px;line-height:22px;height:22px;right:659px;color:#9aa7b4;font-size:17.5px"><span class="cj" style="width:16px;font-size:14.5px">语</span><span class="cj" style="width:16px;font-size:14.5px">文</span><span class="cj" style="width:16px;font-size:14.5px">分</span><span class="cj" style="width:16px;font-size:14.5px">数</span></div>
<div class="t mono" style="top:0.30000000000001137px;line-height:22px;height:22px;right:541px;color:#9aa7b4;font-size:17.5px"><span class="cj" style="width:16px;font-size:14.5px">数</span><span class="cj" style="width:16px;font-size:14.5px">学</span><span class="cj" style="width:16px;font-size:14.5px">分</span><span class="cj" style="width:16px;font-size:14.5px">数</span></div>
<div class="t mono" style="top:0.30000000000001137px;line-height:22px;height:22px;right:423px;color:#9aa7b4;font-size:17.5px"><span class="cj" style="width:16px;font-size:14.5px">英</span><span class="cj" style="width:16px;font-size:14.5px">语</span><span class="cj" style="width:16px;font-size:14.5px">分</span><span class="cj" style="width:16px;font-size:14.5px">数</span></div>
<svg style="left:170px;top:6.300000000000011px" width="6" height="10" viewBox="0 0 6 10"><path d="M0.500 3.500L3 0.800 5.500 3.500zM0.500 6.500L3 9.200 5.500 6.500z" fill="#8b9299"/></svg>
<svg style="left:251px;top:6.300000000000011px" width="6" height="10" viewBox="0 0 6 10"><path d="M0.500 3.500L3 0.800 5.500 3.500zM0.500 6.500L3 9.200 5.500 6.500z" fill="#8b9299"/></svg>
<svg style="left:339px;top:6.300000000000011px" width="6" height="10" viewBox="0 0 6 10"><path d="M0.500 3.500L3 0.800 5.500 3.500zM0.500 6.500L3 9.200 5.500 6.500z" fill="#8b9299"/></svg>
<svg style="left:476px;top:6.300000000000011px" width="6" height="10" viewBox="0 0 6 10"><path d="M0.500 3.500L3 0.800 5.500 3.500zM0.500 6.500L3 9.200 5.500 6.500z" fill="#8b9299"/></svg>
<svg style="left:556px;top:6.300000000000011px" width="6" height="10" viewBox="0 0 6 10"><path d="M0.500 3.500L3 0.800 5.500 3.500zM0.500 6.500L3 9.200 5.500 6.500z" fill="#8b9299"/></svg>
<svg style="left:675px;top:6.300000000000011px" width="6" height="10" viewBox="0 0 6 10"><path d="M0.500 3.500L3 0.800 5.500 3.500zM0.500 6.500L3 9.200 5.500 6.500z" fill="#8b9299"/></svg>
<svg style="left:793px;top:6.300000000000011px" width="6" height="10" viewBox="0 0 6 10"><path d="M0.500 3.500L3 0.800 5.500 3.500zM0.500 6.500L3 9.200 5.500 6.500z" fill="#8b9299"/></svg>
<svg style="left:911px;top:6.300000000000011px" width="6" height="10" viewBox="0 0 6 10"><path d="M0.500 3.500L3 0.800 5.500 3.500zM0.500 6.500L3 9.200 5.500 6.500z" fill="#8b9299"/></svg>
<div class="a" style="left:137px;top:24px;width:789px;height:1px;background:#35383a"></div>
<div class="a" style="left:185px;top:0px;width:1px;height:286px;background:#323436"></div>
<div class="a" style="left:266px;top:0px;width:1px;height:286px;background:#323436"></div>
<div class="a" style="left:353px;top:0px;width:1px;height:286px;background:#323436"></div>
<div class="a" style="left:491px;top:0px;width:1px;height:286px;background:#323436"></div>
<div class="a" style="left:569px;top:0px;width:1px;height:286px;background:#323436"></div>
<div class="a" style="left:689px;top:0px;width:1px;height:286px;background:#323436"></div>
<div class="a" style="left:807px;top:0px;width:1px;height:286px;background:#323436"></div>
<div class="a" style="left:925px;top:0px;width:1px;height:286px;background:#323436"></div>
<div class="t mono" style="top:28.0px;line-height:22px;height:22px;right:1145px;color:#98a4b0;font-size:17.5px">0</div>
<div class="t mono" style="top:28.0px;line-height:22px;height:22px;left:189px;color:#a9b7c6;font-size:17.5px"><span class="cj" style="width:16px;font-size:14.5px">钱</span>mv</div>
<div class="t mono" style="top:28.0px;line-height:22px;height:22px;left:270px;color:#a9b7c6;font-size:17.5px">S12056</div>
<div class="t mono" style="top:28.0px;line-height:22px;height:22px;left:358px;color:#a9b7c6;font-size:17.5px">2008-09-16</div>
<div class="t mono" style="top:28.0px;line-height:22px;height:22px;left:494px;color:#a9b7c6;font-size:17.5px"><span class="cj" style="width:16px;font-size:14.5px">女</span></div>
<div class="t mono" style="top:28.0px;line-height:22px;height:22px;right:642px;color:#a9b7c6;font-size:17.5px">48</div>
<div class="t mono" style="top:28.0px;line-height:22px;height:22px;right:523px;color:#a9b7c6;font-size:17.5px">30</div>
<div class="t mono" style="top:28.0px;line-height:22px;height:22px;right:405px;color:#a9b7c6;font-size:17.5px">71</div>
<div class="t mono" style="top:55.099999999999994px;line-height:22px;height:22px;right:1145px;color:#98a4b0;font-size:17.5px">1</div>
<div class="t mono" style="top:55.099999999999994px;line-height:22px;height:22px;left:189px;color:#a9b7c6;font-size:17.5px"><span class="cj" style="width:16px;font-size:14.5px">郑</span>Ob</div>
<div class="t mono" style="top:55.099999999999994px;line-height:22px;height:22px;left:270px;color:#a9b7c6;font-size:17.5px">S57657</div>
<div class="t mono" style="top:55.099999999999994px;line-height:22px;height:22px;left:358px;color:#a9b7c6;font-size:17.5px">2005-08-29</div>
<div class="t mono" style="top:55.099999999999994px;line-height:22px;height:22px;left:494px;color:#a9b7c6;font-size:17.5px"><span class="cj" style="width:16px;font-size:14.5px">女</span></div>
<div class="t mono" style="top:55.099999999999994px;line-height:22px;height:22px;right:642px;color:#a9b7c6;font-size:17.5px">63</div>
<div class="t mono" style="top:55.099999999999994px;line-height:22px;height:22px;right:523px;color:#a9b7c6;font-size:17.5px">18</div>
<div class="t mono" style="top:55.099999999999994px;line-height:22px;height:22px;right:405px;color:#a9b7c6;font-size:17.5px">18</div>
<div class="t mono" style="top:82.19999999999999px;line-height:22px;height:22px;right:1145px;color:#98a4b0;font-size:17.5px">2</div>
<div class="t mono" style="top:82.19999999999999px;line-height:22px;height:22px;left:189px;color:#a9b7c6;font-size:17.5px"><span class="cj" style="width:16px;font-size:14.5px">赵</span>FW</div>
<div class="t mono" style="top:82.19999999999999px;line-height:22px;height:22px;left:270px;color:#a9b7c6;font-size:17.5px">S88742</div>
<div class="t mono" style="top:82.19999999999999px;line-height:22px;height:22px;left:358px;color:#a9b7c6;font-size:17.5px">2005-04-11</div>
<div class="t mono" style="top:82.19999999999999px;line-height:22px;height:22px;left:494px;color:#a9b7c6;font-size:17.5px"><span class="cj" style="width:16px;font-size:14.5px">男</span></div>
<div class="t mono" style="top:82.19999999999999px;line-height:22px;height:22px;right:642px;color:#a9b7c6;font-size:17.5px">38</div>
<div class="t mono" style="top:82.19999999999999px;line-height:22px;height:22px;right:523px;color:#a9b7c6;font-size:17.5px">66</div>
<div class="t mono" style="top:82.19999999999999px;line-height:22px;height:22px;right:405px;color:#a9b7c6;font-size:17.5px">45</div>
<div class="t mono" style="top:109.30000000000001px;line-height:22px;height:22px;right:1145px;color:#98a4b0;font-size:17.5px">3</div>
<div class="t mono" style="top:109.30000000000001px;line-height:22px;height:22px;left:189px;color:#a9b7c6;font-size:17.5px"><span class="cj" style="width:16px;font-size:14.5px">李</span>pR</div>
<div class="t mono" style="top:109.30000000000001px;line-height:22px;height:22px;left:270px;color:#a9b7c6;font-size:17.5px">S49727</div>
<div class="t mono" style="top:109.30000000000001px;line-height:22px;height:22px;left:358px;color:#a9b7c6;font-size:17.5px">2008-07-25</div>
<div class="t mono" style="top:109.30000000000001px;line-height:22px;height:22px;left:494px;color:#a9b7c6;font-size:17.5px"><span class="cj" style="width:16px;font-size:14.5px">女</span></div>
<div class="t mono" style="top:109.30000000000001px;line-height:22px;height:22px;right:642px;color:#a9b7c6;font-size:17.5px">88</div>
<div class="t mono" style="top:109.30000000000001px;line-height:22px;height:22px;right:523px;color:#a9b7c6;font-size:17.5px">62</div>
<div class="t mono" style="top:109.30000000000001px;line-height:22px;height:22px;right:405px;color:#a9b7c6;font-size:17.5px">100</div>
<div class="t mono" style="top:136.39999999999998px;line-height:22px;height:22px;right:1145px;color:#98a4b0;font-size:17.5px">4</div>
<div class="t mono" style="top:136.39999999999998px;line-height:22px;height:22px;left:189px;color:#a9b7c6;font-size:17.5px"><span class="cj" style="width:16px;font-size:14.5px">孙</span>yJ</div>
<div class="t mono" style="top:136.39999999999998px;line-height:22px;height:22px;left:270px;color:#a9b7c6;font-size:17.5px">S11814</div>
<div class="t mono" style="top:136.39999999999998px;line-height:22px;height:22px;left:358px;color:#a9b7c6;font-size:17.5px">2005-07-18</div>
<div class="t mono" style="top:136.39999999999998px;line-height:22px;height:22px;left:494px;color:#a9b7c6;font-size:17.5px"><span class="cj" style="width:16px;font-size:14.5px">女</span></div>
<div class="t mono" style="top:136.39999999999998px;line-height:22px;height:22px;right:642px;color:#a9b7c6;font-size:17.5px">94</div>
<div class="t mono" style="top:136.39999999999998px;line-height:22px;height:22px;right:523px;color:#a9b7c6;font-size:17.5px">29</div>
<div class="t mono" style="top:136.39999999999998px;line-height:22px;height:22px;right:405px;color:#a9b7c6;font-size:17.5px">5</div>
<div class="t mono" style="top:163.5px;line-height:22px;height:22px;right:1145px;color:#98a4b0;font-size:17.5px">5</div>
<div class="t mono" style="top:163.5px;line-height:22px;height:22px;left:189px;color:#a9b7c6;font-size:17.5px"><span class="cj" style="width:16px;font-size:14.5px">孙</span>nU</div>
<div class="t mono" style="top:163.5px;line-height:22px;height:22px;left:270px;color:#a9b7c6;font-size:17.5px">S83464</div>
<div class="t mono" style="top:163.5px;line-height:22px;height:22px;left:358px;color:#a9b7c6;font-size:17.5px">2005-04-18</div>
<div class="t mono" style="top:163.5px;line-height:22px;height:22px;left:494px;color:#a9b7c6;font-size:17.5px"><span class="cj" style="width:16px;font-size:14.5px">男</span></div>
<div class="t mono" style="top:163.5px;line-height:22px;height:22px;right:642px;color:#a9b7c6;font-size:17.5px">32</div>
<div class="t mono" style="top:163.5px;line-height:22px;height:22px;right:523px;color:#a9b7c6;font-size:17.5px">16</div>
<div class="t mono" style="top:163.5px;line-height:22px;height:22px;right:405px;color:#a9b7c6;font-size:17.5px">84</div>
<div class="t mono" style="top:190.60000000000002px;line-height:22px;height:22px;right:1145px;color:#98a4b0;font-size:17.5px">6</div>
<div class="t mono" style="top:190.60000000000002px;line-height:22px;height:22px;left:189px;color:#a9b7c6;font-size:17.5px"><span class="cj" style="width:16px;font-size:14.5px">郑</span>xS</div>
<div class="t mono" style="top:190.60000000000002px;line-height:22px;height:22px;left:270px;color:#a9b7c6;font-size:17.5px">S50827</div>
<div class="t mono" style="top:190.60000000000002px;line-height:22px;height:22px;left:358px;color:#a9b7c6;font-size:17.5px">2006-10-24</div>
<div class="t mono" style="top:190.60000000000002px;line-height:22px;height:22px;left:494px;color:#a9b7c6;font-size:17.5px"><span class="cj" style="width:16px;font-size:14.5px">男</span></div>
<div class="t mono" style="top:190.60000000000002px;line-height:22px;height:22px;right:642px;color:#a9b7c6;font-size:17.5px">97</div>
<div class="t mono" style="top:190.60000000000002px;line-height:22px;height:22px;right:523px;color:#a9b7c6;font-size:17.5px">30</div>
<div class="t mono" style="top:190.60000000000002px;line-height:22px;height:22px;right:405px;color:#a9b7c6;font-size:17.5px">4</div>
<div class="t mono" style="top:217.70000000000005px;line-height:22px;height:22px;right:1145px;color:#98a4b0;font-size:17.5px">7</div>
<div class="t mono" style="top:217.70000000000005px;line-height:22px;height:22px;left:189px;color:#a9b7c6;font-size:17.5px"><span class="cj" style="width:16px;font-size:14.5px">周</span>oI</div>
<div class="t mono" style="top:217.70000000000005px;line-height:22px;height:22px;left:270px;color:#a9b7c6;font-size:17.5px">S15429</div>
<div class="t mono" style="top:217.70000000000005px;line-height:22px;height:22px;left:358px;color:#a9b7c6;font-size:17.5px">2008-08-13</div>
<div class="t mono" style="top:217.70000000000005px;line-height:22px;height:22px;left:494px;color:#a9b7c6;font-size:17.5px"><span class="cj" style="width:16px;font-size:14.5px">女</span></div>
<div class="t mono" style="top:217.70000000000005px;line-height:22px;height:22px;right:642px;color:#a9b7c6;font-size:17.5px">57</div>
<div class="t mono" style="top:217.70000000000005px;line-height:22px;height:22px;right:523px;color:#a9b7c6;font-size:17.5px">50</div>
<div class="t mono" style="top:217.70000000000005px;line-height:22px;height:22px;right:405px;color:#a9b7c6;font-size:17.5px">100</div>
<div class="t mono" style="top:244.8px;line-height:22px;height:22px;right:1145px;color:#98a4b0;font-size:17.5px">8</div>
<div class="t mono" style="top:244.8px;line-height:22px;height:22px;left:189px;color:#a9b7c6;font-size:17.5px"><span class="cj" style="width:16px;font-size:14.5px">李</span>AY</div>
<div class="t mono" style="top:244.8px;line-height:22px;height:22px;left:270px;color:#a9b7c6;font-size:17.5px">NaN</div>
<div class="t mono" style="top:244.8px;line-height:22px;height:22px;left:358px;color:#a9b7c6;font-size:17.5px">2008-12-22</div>
<div class="t mono" style="top:244.8px;line-height:22px;height:22px;left:494px;color:#a9b7c6;font-size:17.5px"><span class="cj" style="width:16px;font-size:14.5px">男</span></div>
<div class="t mono" style="top:244.8px;line-height:22px;height:22px;right:642px;color:#a9b7c6;font-size:17.5px">95</div>
<div class="t mono" style="top:244.8px;line-height:22px;height:22px;right:523px;color:#a9b7c6;font-size:17.5px">37</div>
<div class="t mono" style="top:244.8px;line-height:22px;height:22px;right:405px;color:#a9b7c6;font-size:17.5px">83</div>
<div class="t mono" style="top:271.9px;line-height:22px;height:22px;right:1145px;color:#98a4b0;font-size:17.5px">9</div>
<div class="t mono" style="top:271.9px;line-height:22px;height:22px;left:189px;color:#a9b7c6;font-size:17.5px"><span class="cj" style="width:16px;font-size:14.5px">钱</span>ko</div>
<div class="t mono" style="top:271.9px;line-height:22px;height:22px;left:270px;color:#a9b7c6;font-size:17.5px">S44814</div>
<div class="t mono" style="top:271.9px;line-height:22px;height:22px;left:358px;color:#a9b7c6;font-size:17.5px">NaN</div>
<div class="t mono" style="top:271.9px;line-height:22px;height:22px;left:494px;color:#a9b7c6;font-size:17.5px"><span class="cj" style="width:16px;font-size:14.5px">女</span></div>
<div class="t mono" style="top:271.9px;line-height:22px;height:22px;right:642px;color:#a9b7c6;font-size:17.5px">32</div>
<div class="t mono" style="top:271.9px;line-height:22px;height:22px;right:523px;color:#a9b7c6;font-size:17.5px">16</div>
<div class="t mono" style="top:271.9px;line-height:22px;height:22px;right:405px;color:#a9b7c6;font-size:17.5px">55</div>
</div>
<div class="a" style="left:1843px;top:122px;width:11px;height:286px;background:#3a3c3e;"></div>
<div class="a" style="left:1843px;top:147px;width:11px;height:123px;background:#555759;"></div>
<svg style="left:1880px;top:129px" width="13" height="10" viewBox="0 0 13 10"><path d="M1 5l4 4 7-8" stroke="#429650" stroke-width="2.200" fill="none"/></svg>
<div class="a" style="left:1891px;top:276px;width:8px;height:449px;background:#47494b;"></div>
<div class="a" style="left:648px;top:428px;width:1235px;height:52px;background:#3e3f41;"></div>
<div class="t mono" style="top:442.5px;line-height:22px;height:22px;color:#4a7fb5;font-size:17.5px;left:576px;">In 9</div>
<div class="t mono" style="top:442.5px;line-height:22px;height:22px;color:#5f6366;font-size:17.5px;left:626px;">1</div>
<div class="t mono" style="top:442.5px;line-height:22px;height:22px;color:#a9b7c6;font-size:17.5px;left:655px;">df.set_index(<span style="color:#6a8759">'<span class="cj" style="width:16.2px;font-size:14.5px">姓</span><span class="cj" style="width:16.2px;font-size:14.5px">名</span><span style="display:inline-block;width:6.500px"></span>'</span>).mean(<span style="color:#aa4926">axis</span><span style="color:#aa4926">=</span><span style="color:#6897bb">1</span><span style="color:#cc7832">,</span> <span style="color:#aa4926">numeric_only</span><span style="color:#aa4926">=</span><span style="color:#cc7832">True</span>).head(<span style="color:#6897bb">3</span>)</div>
<div class="t" style="left:655px;top:464px;color:#6e7275;font-size:12.6px;">Executed at 2025.04.26 17:21:19 in 9ms</div>
<div class="t mono" style="top:495.5px;line-height:22px;height:22px;color:#b8442a;font-size:17.5px;font-weight:bold;letter-spacing:-1.500px;left:567px;">Out 9</div>
<svg style="left:625px;top:502px" width="9" height="6" viewBox="0 0 9 6"><path d="M0.500 1l4 4 4-4" stroke="#9a9c9e" stroke-width="1.500" fill="none"/></svg>
<svg style="left:664px;top:500px" width="10" height="10" viewBox="0 0 10 10"><path d="M1 0v10" stroke="#5a5d5f" stroke-width="1.500"/><path d="M9 0.500L4 5l5 4.500" stroke="#5a5d5f" stroke-width="1.500" fill="none"/></svg>
<svg style="left:693px;top:500px" width="6" height="10" viewBox="0 0 6 10"><path d="M5.500 0.500L1 5l4.500 4.500" stroke="#5a5d5f" stroke-width="1.500" fill="none"/></svg>
<div class="t" style="left:714px;top:495px;color:#9a9c9e;font-size:11.5px;">3 rows</div>
<svg style="left:750px;top:504px" width="7" height="5" viewBox="0 0 7 5"><path d="M0.500 0.500l3 3 3-3" stroke="#9a9c9e" stroke-width="1.200" fill="none"/></svg>
<svg style="left:772px;top:500px" width="6" height="10" viewBox="0 0 6 10"><path d="M0.500 0.500L5 5 .5 9.500" stroke="#5a5d5f" stroke-width="1.500" fill="none"/></svg>
<div class="a" style="left:656px;top:518px;width:1200px;height:1px;background:#333537;"></div>
<div class="t" style="left:1737px;top:495.5px;color:#a2a4a6;font-size:10.3px;font-weight:bold;">CSV</div>
<svg style="left:1760px;top:504px" width="6" height="4.5" viewBox="0 0 6 4.5"><path d="M0.500 0.500l3 3 3-3" stroke="#9a9c9e" stroke-width="1.200" fill="none"/></svg>
<svg style="left:1782px;top:498px" width="12" height="14" viewBox="0 0 12 14"><path d="M6 0v8M2.500 5L6 8.500 9.500 5" stroke="#afb1b3" stroke-width="1.600" fill="none"/><path d="M0 12.500h12" stroke="#afb1b3" stroke-width="1.800"/></svg>
<svg style="left:1810px;top:501px" width="8" height="8" viewBox="0 0 8 8"><path d="M1 7l6-6M3 1h4v4" stroke="#8a8c8e" stroke-width="1.300" fill="none"/></svg>
<svg style="left:1833px;top:500px" width="15" height="10" viewBox="0 0 15 10"><path d="M0.500 5C3 1 12 1 14.500 5 12 9 3 9 .5 5z" fill="none" stroke="#afb1b3" stroke-width="1.700"/><circle cx="7.500" cy="5" r="2.300" fill="#afb1b3"/><path d="M11.500 10.500h3.500l-1.750 2z" fill="#afb1b3"/></svg>
<svg style="left:1869px;top:498px" width="4" height="14" viewBox="0 0 4 14"><circle cx="2" cy="2" r="1.400" fill="#afb1b3"/><circle cx="2" cy="7" r="1.400" fill="#afb1b3"/><circle cx="2" cy="12" r="1.400" fill="#afb1b3"/></svg>
<svg style="left:722px;top:537px" width="6" height="8" viewBox="0 0 6 8"><path d="M0.500 3L3 0.500 5.500 3zM0.500 5L3 7.500 5.500 5z" fill="#9aa3ab"/></svg>
<div class="t mono" style="top:543.5px;line-height:22px;height:22px;color:#b9c4cf;font-size:17.5px;left:659px;"><span class="cj" style="width:16px;font-size:14.5px">姓</span><span class="cj" style="width:16px;font-size:14.5px">名</span></div>
<div class="t mono" style="top:571.5px;line-height:22px;height:22px;color:#b9c4cf;font-size:17.5px;left:659px;"><span class="cj" style="width:16px;font-size:14.5px">钱</span>mv</div>
<div class="t mono" style="top:598.5px;line-height:22px;height:22px;color:#b9c4cf;font-size:17.5px;left:659px;"><span class="cj" style="width:16px;font-size:14.5px">郑</span>Ob</div>
<div class="t mono" style="top:625.5px;line-height:22px;height:22px;color:#b9c4cf;font-size:17.5px;left:659px;"><span class="cj" style="width:16px;font-size:14.5px">赵</span>FW</div>
<div class="t mono" style="top:571.5px;line-height:22px;height:22px;color:#b9c4cf;font-size:17.5px;width:17px;overflow:hidden;left:766px;">47.333333</div>
<div class="t mono" style="top:598.5px;line-height:22px;height:22px;color:#b9c4cf;font-size:17.5px;width:17px;overflow:hidden;left:766px;">33.000000</div>
<div class="t mono" style="top:625.5px;line-height:22px;height:22px;color:#b9c4cf;font-size:17.5px;left:766px;">49.666667</div>
<div class="a" style="left:736px;top:522px;width:1px;height:127px;background:#333537;"></div>
<div class="a" style="left:859px;top:566px;width:1px;height:83px;background:#333537;"></div>
<div class="a" style="left:656px;top:648px;width:204px;height:1px;background:#333537;"></div>
<div class="a" style="left:656px;top:566px;width:204px;height:1px;background:#313335;"></div>
<div class="a" style="left:1855px;top:522px;width:1px;height:135px;background:#303234;"></div>
<div class="a" style="left:518px;top:688px;width:128px;height:28px;background:#323232;"></div>
<div class="a" style="left:650px;top:680px;width:1233px;height:47px;background:#3e3f41;"></div>
<div class="a" style="left:650px;top:688px;width:1233px;height:28px;background:#353637;"></div>
<div class="a" style="left:645px;top:679px;width:5px;height:48px;background:#2f4a33;"></div>
<div class="a" style="left:646px;top:680px;width:3.5px;height:46.5px;background:#6a976d;"></div>
<div class="t mono" style="top:693.5px;line-height:22px;height:22px;color:#4a7fb5;font-size:17.5px;left:576px;">In _</div>
<div class="t mono" style="top:693.5px;line-height:22px;height:22px;color:#5f6366;font-size:17.5px;left:626px;">1</div>
<div class="a" style="left:790px;top:691px;width:19px;height:23px;background:#3b514d;"></div>
<div class="t mono" style="top:693.5px;line-height:22px;height:22px;color:#a9b7c6;font-size:17.5px;left:655px;">df.<span class="cj" style="width:15.6px;font-size:14.5px">语</span><span class="cj" style="width:15.6px;font-size:14.5px">文</span><span class="cj" style="width:15.6px;font-size:14.5px">分</span><span class="cj" style="width:15.6px;font-size:14.5px">数</span>.max<span style="color:#c9d434">()</span></div>
<svg style="left:769px;top:712px" width="14" height="21" viewBox="0 0 14 21"><path d="M1 1v16l4-3.500 2.800 6.500 2.600-1.100-2.800-6.300H13z" fill="#fff" stroke="#222" stroke-width="1.200"/></svg>
<div class="a" style="left:782px;top:485px;width:374px;height:128px;background:#3e3f41;border:1px solid #4b4e50"></div>
<svg style="left:806px;top:506px" width="30" height="30" viewBox="0 0 30 30"><defs><linearGradient id="eg" x1="0" y1="0" x2="0" y2="1"><stop offset="0" stop-color="#f4706a"/><stop offset="1" stop-color="#e23a6c"/></linearGradient></defs><circle cx="15" cy="15" r="14.200" fill="url(#eg)"/><rect x="13.400" y="7" width="3.400" height="10" rx="1" fill="#5a1f33"/><circle cx="15.100" cy="21.500" r="2" fill="#5a1f33"/></svg>
<div class="t" style="left:857px;top:504.5px;color:#d4d4d4;font-size:13.5px;font-weight:bold;">Run Error</div>
<div class="t" style="left:857px;top:530.5px;color:#bbbbbb;font-size:13.55px;">Index 3 out of bounds for length 3</div>
<svg style="left:1136px;top:494px" width="9" height="9" viewBox="0 0 9 9"><path d="M0.500 0.500l8 8M8.500 0.500l-8 8" stroke="#a0a2a4" stroke-width="1.400"/></svg>
<div class="a" style="left:1060px;top:569px;width:75px;height:27px;background:#365880;border:2px solid #4a7db5;border-radius:4px"></div>
<div class="t" style="left:1060px;top:573px;width:75px;text-align:center;color:#e6e6e6;font-weight:bold;font-size:12.500px">OK</div>
<div class="a" style="left:518px;top:1016px;width:1383px;height:24px;background:#323335;"></div>
<div class="a" style="left:520px;top:1015px;width:1381px;height:1.5px;background:#505153;"></div>
<svg style="left:1906px;top:77.5px" width="11" height="11.5" viewBox="0 0 13 12"><path d="M0 0h13v2H0zM1.500 3.500h10v2h-10zM0 7h13v5H0z" fill="#b4b6b8"/></svg>
<div class="a" style="left:1900px;top:94px;width:20px;height:52px"><div class="t" style="left:10px;top:0;transform-origin:0 0;transform:rotate(90deg) translate(0,-10px);width:52px;text-align:center;font-size:10.5px;font-weight:bold;color:#a3a5a7">Database</div></div>
<svg style="left:1906px;top:165px" width="11" height="9.5" viewBox="0 0 13 11"><path d="M0 0h3.500v11H0zM4.800 0h3.500v11H4.800zM9.500 0H13v11H9.500z" fill="#b4b6b8"/></svg>
<div class="a" style="left:1900px;top:181px;width:20px;height:44px"><div class="t" style="left:10px;top:0;transform-origin:0 0;transform:rotate(90deg) translate(0,-10px);width:44px;text-align:center;font-size:10.8px;font-weight:bold;color:#a3a5a7">SciView</div></div>
<svg style="left:1906px;top:241px" width="11.5" height="12" viewBox="0 0 13 13"><path d="M2 9V5c0-5 9-5 9 0v4l1.500 2H.5z" fill="#b4b6b8"/><circle cx="11" cy="2.500" r="2.500" fill="#e05555"/></svg>
<div class="a" style="left:1900px;top:257px;width:20px;height:72px"><div class="t" style="left:10px;top:0;transform-origin:0 0;transform:rotate(90deg) translate(0,-10px);width:72px;text-align:center;font-size:11px;font-weight:bold;color:#a3a5a7">Notifications</div></div>
<div class="a" style="left:16px;top:1040px;width:1934px;height:1px;background:#323232;"></div>
<div class="a" style="left:16px;top:1041px;width:1934px;height:22px;background:#3e3f41;"></div>
<div class="a" style="left:16px;top:1063px;width:1934px;height:47px;background:#3e3f41;"></div>
<svg style="left:47px;top:1046px" width="12" height="12" viewBox="0 0 12 12"><path d="M3 1v10M3 7c5 0 6-1 6-4" stroke="#afb1b3" stroke-width="1.500" fill="none"/><circle cx="9" cy="2.500" r="1.800" fill="#afb1b3"/><circle cx="3" cy="1.800" r="1.500" fill="#afb1b3"/></svg>
<div class="t" style="left:66px;top:1042px;color:#b0b2b4;font-size:11.8px;">Version Control</div>
<svg style="left:172px;top:1046px" width="12" height="12" viewBox="0 0 12 12"><circle cx="6" cy="6" r="5.500" fill="#afb1b3"/><path d="M3 4h6M3 6.500h6M6 4v5" stroke="#3e3f41" stroke-width="1.100"/></svg>
<div class="t" style="left:189px;top:1042px;color:#b0b2b4;font-size:11.8px;">Python Packages</div>
<svg style="left:303px;top:1046px" width="12" height="12" viewBox="0 0 12 12"><path d="M0 2h12M0 6h12M0 10h12" stroke="#afb1b3" stroke-width="1.800"/></svg>
<div class="t" style="left:320px;top:1042px;color:#b0b2b4;font-size:11.8px;">TODO</div>
<svg style="left:373px;top:1046px" width="12" height="12" viewBox="0 0 12 12"><circle cx="6" cy="6" r="5.500" fill="#afb1b3"/><path d="M3 6h6M6 3v6" stroke="#3e3f41" stroke-width="1.200"/></svg>
<div class="t" style="left:390px;top:1042px;color:#b0b2b4;font-size:11.8px;">Python Console</div>
<svg style="left:496px;top:1046px" width="12" height="12" viewBox="0 0 12 12"><circle cx="6" cy="6" r="5.500" fill="#afb1b3"/><path d="M6 2.500v4.500M6 8.500v1.300" stroke="#3e3f41" stroke-width="1.500"/></svg>
<div class="t" style="left:513px;top:1042px;color:#b0b2b4;font-size:11.8px;">Problems</div>
<svg style="left:583px;top:1046px" width="12" height="12" viewBox="0 0 12 12"><rect x="0" y="0.500" width="12" height="11" fill="#afb1b3"/><path d="M2.500 4l2.500 2-2.500 2M6.500 8.500h3" stroke="#3e3f41" stroke-width="1.200" fill="none"/></svg>
<div class="t" style="left:600px;top:1042px;color:#b0b2b4;font-size:11.8px;">Terminal</div>
<svg style="left:667px;top:1046px" width="12" height="12" viewBox="0 0 12 12"><circle cx="6" cy="6" r="5.500" fill="#afb1b3"/><path d="M4.500 3.500v5l4-2.500z" fill="#3e3f41"/></svg>
<div class="t" style="left:684px;top:1042px;color:#b0b2b4;font-size:11.8px;">Services</div>
<svg style="left:746px;top:1046px" width="12" height="12" viewBox="0 0 12 12"><path d="M1 3.500c2-3.500 8-3.500 10 0M1 8.500c2 3.500 8 3.500 10 0" stroke="#afb1b3" stroke-width="1.600" fill="none"/></svg>
<div class="t" style="left:763px;top:1042px;color:#b0b2b4;font-size:11.8px;">Jupyter</div>
<div class="a" style="left:27px;top:1067px;width:12px;height:10px;border:1px solid #8a8c8e;border-radius:1px"></div>
<div class="t" style="left:55px;top:1062.5px;color:#a8aaac;font-size:13.3px;">Jupyter Server started at http://localhost:8888 // Open in Browser (4 minutes ago)</div>
<div class="t" style="left:1544px;top:1063px;color:#a8aaac;font-size:12.9px;">11:14</div>
<div class="t" style="left:1585px;top:1063px;color:#a8aaac;font-size:12.9px;">LF</div>
<div class="t" style="left:1609px;top:1063px;color:#a8aaac;font-size:12.9px;">UTF-8</div>
<div class="t" style="left:1655px;top:1063px;color:#a8aaac;font-size:12.9px;">4 spaces</div>
<div class="t" style="left:1718px;top:1063px;color:#a8aaac;font-size:12.9px;">Python 3.11 (pandasPro2) (2)</div>
<svg style="left:1897px;top:1066px" width="11" height="11" viewBox="0 0 11 11"><rect x="3" y="5" width="8" height="6" fill="#afb1b3"/><path d="M1 5V3.500a2.500 2.500 0 0 1 5 0V5" stroke="#afb1b3" stroke-width="1.300" fill="none"/></svg>
<div class="a" style="left:1912px;top:956px;width:38px;height:60px;background:#2db55d;border-top:4px solid #2a5f8a;border-left:2px solid #2a7f9a"></div>
<div class="a" style="left:1820px;top:990px;width:51px;height:51px;border-radius:50%;background:#4696f0;border:2px solid #e4effc"></div>
<div class="t" style="left:1820px;top:1005px;width:51px;text-align:center;color:#b4d6fa;font-size:13.500px;letter-spacing:-0.300px">05:09</div>
<div class="a" style="left:1736px;top:1026px;width:214px;height:27px;background:#fdfdfd;border-radius:4px 0 0 4px"></div>
<svg style="left:1722px;top:1021px" width="31" height="31" viewBox="0 0 30 30"><rect x="0" y="0" width="30" height="30" rx="8" fill="#f2552c" transform="rotate(-8 15 15)"/><text x="15" y="24" text-anchor="middle" font-family="Liberation Sans,sans-serif" font-weight="bold" font-size="25" fill="#fff">S</text></svg>
<div class="t" style="left:1758px;top:1030px;color:#2c6fd6;font-size:14px;font-weight:bold;font-family:'Liberation Sans','Noto Sans CJK SC',sans-serif">英</div>
<div class="t" style="left:1783px;top:1030px;color:#2c6fd6;font-size:13px;font-weight:bold;">°,</div>
<svg style="left:1810px;top:1032px" width="9" height="15" viewBox="0 0 9 15"><rect x="2" y="0" width="5" height="9" rx="2.500" fill="#2c6fd6"/><path d="M0 7c0 6 9 6 9 0M4.500 11v4" stroke="#2c6fd6" stroke-width="1.300" fill="none"/></svg>
<svg style="left:1831px;top:1033px" width="15" height="12" viewBox="0 0 15 12"><rect x="0.700" y="0.700" width="13.600" height="10.600" rx="1.500" fill="none" stroke="#2c6fd6" stroke-width="1.400"/><path d="M3 4h9M3 7.500h9" stroke="#2c6fd6" stroke-width="1.300" stroke-dasharray="2 1.500"/></svg>
<svg style="left:1855px;top:1031px" width="15" height="15" viewBox="0 0 15 15"><path d="M1 3l4 2 2.500-3L10 5l4-2-2 5v6H3V8z" fill="#a054e0"/><circle cx="12.500" cy="2.500" r="2" fill="#f05a5a"/></svg>
<svg style="left:1880px;top:1033px" width="13" height="13" viewBox="0 0 13 13"><rect x="0" y="0" width="5.500" height="5.500" fill="#2c6fd6"/><rect x="7.500" y="0" width="5.500" height="5.500" fill="#2c6fd6"/><rect x="0" y="7.500" width="5.500" height="5.500" fill="#2c6fd6"/><rect x="7.500" y="7.500" width="5.500" height="5.500" fill="#2c6fd6"/></svg>
<svg style="left:1902px;top:1033px" width="16" height="12" viewBox="0 0 16 12"><path d="M0 6c2-5 8-6 14-3l2 2-3 3c-4 3-10 2-13-2z" fill="#e8803a"/><circle cx="11" cy="5" r="1.200" fill="#fff"/></svg>
<div class="t" style="left:1724px;top:1047px;color:#ee1c24;font-family:'Liberation Serif',serif;font-style:italic;font-weight:bold;font-size:18.600px;letter-spacing:0;transform-origin:0 50%;transform:scaleX(1.240)" id="redtxt">www.java1234.com</div>
</div></div></body></html>
